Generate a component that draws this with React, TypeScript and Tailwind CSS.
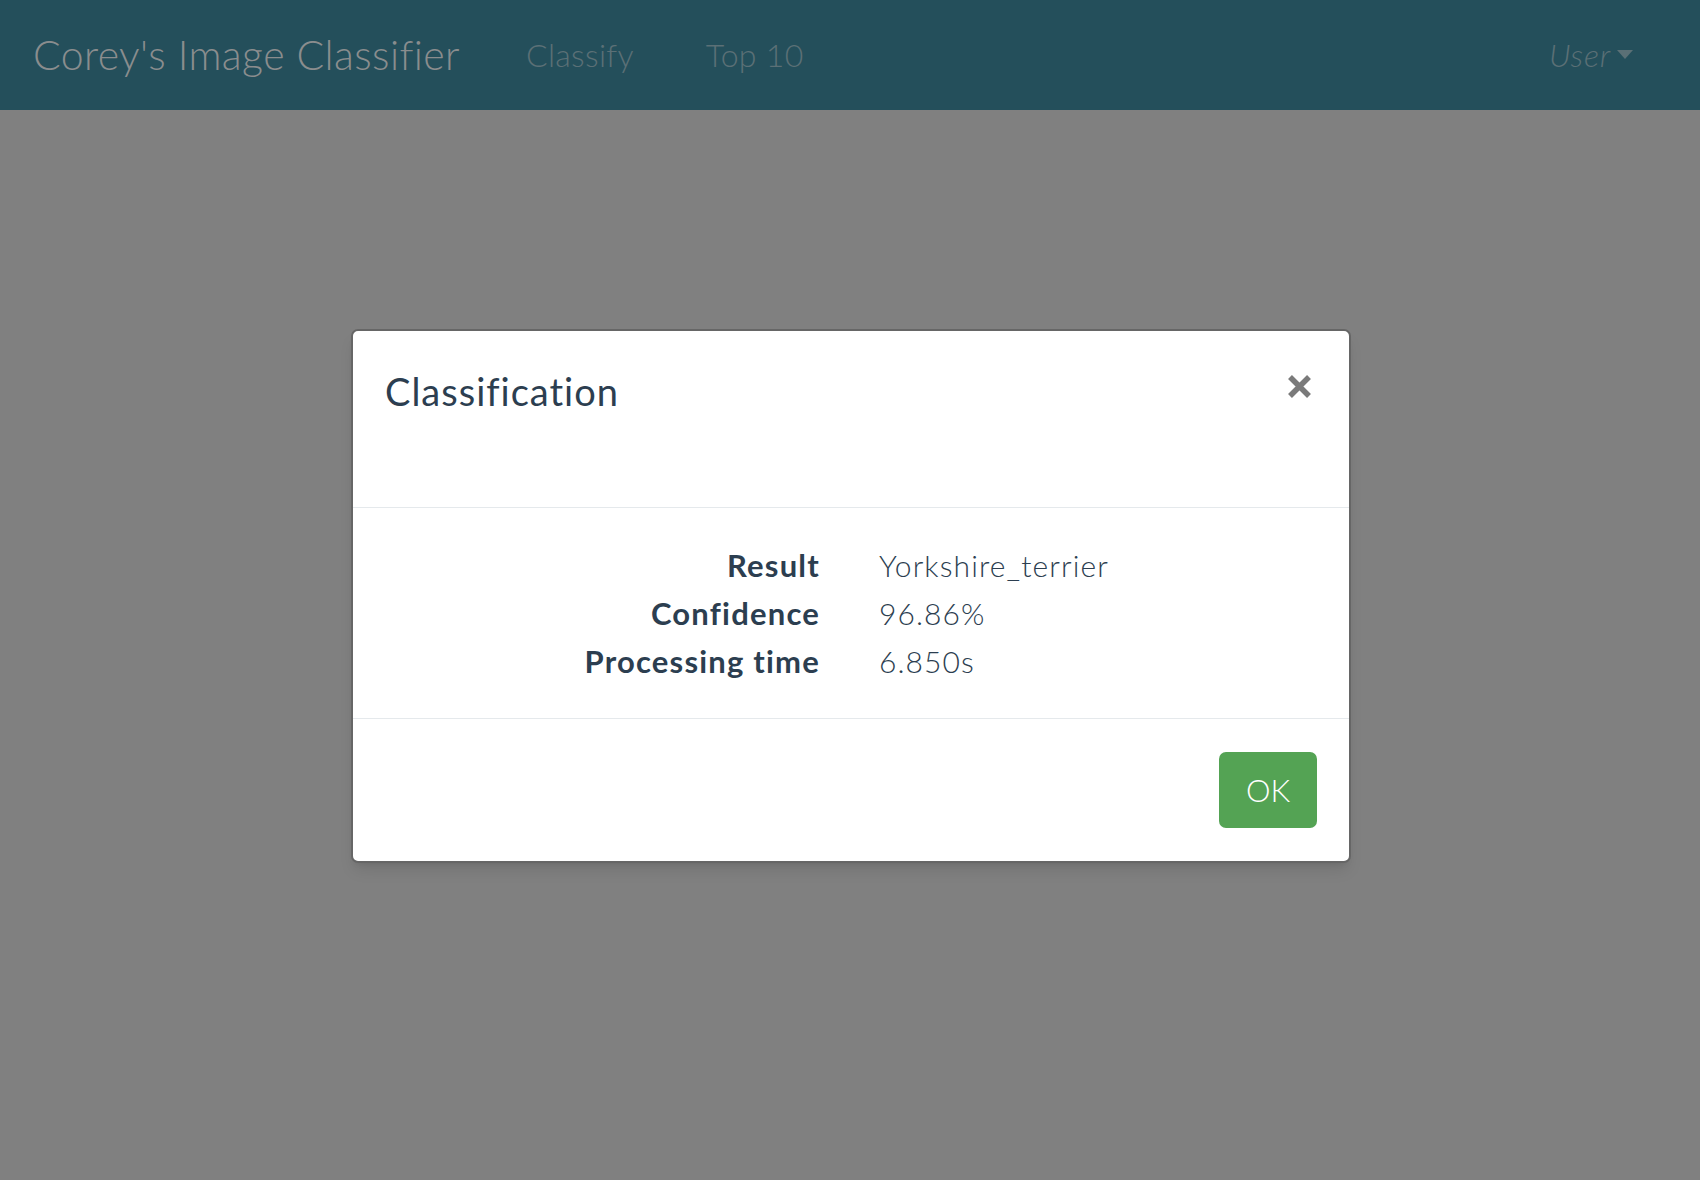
import React from "react";

const rows = [
  { label: "Result", value: "Yorkshire_terrier" },
  { label: "Confidence", value: "96.86%" },
  { label: "Processing time", value: "6.850s" },
];

export default function App() {
  return (
    <div className="min-h-screen bg-[#808080] font-['Lato','Noto_Sans',sans-serif]">
      {/* Navbar */}
      <nav className="flex h-[110px] items-center bg-[#244f5b] pl-[33px] pr-[67px]">
        <span className="text-[41px] font-light tracking-[0.4px] text-[#8a8d8e]">Corey's Image Classifier</span>
        <div className="ml-[66px] flex items-center gap-[72px] text-[32px] font-light tracking-[0.3px] text-[#5b7076]">
          <a>Classify</a>
          <a>Top 10</a>
        </div>
        <div className="ml-auto flex items-center gap-[6px] text-[32px] font-light italic tracking-[0.8px] text-[#5b7076]">
          <span>User</span>
          <svg width="16" height="9" viewBox="0 0 16 9" className="mb-[2px]">
            <path d="M0 0 L16 0 L8 9 Z" fill="#5b7076" />
          </svg>
        </div>
      </nav>

      {/* Modal */}
      <div className="flex justify-center pl-[2px] pt-[219px]">
        <div className="w-[1000px] rounded-[7px] border-2 border-[#666] bg-white text-[#2c3e50] shadow-lg">
          <div className="flex h-[177px] items-start justify-between border-b border-[#e5e9ec] pl-[32px] pr-[36px] pt-[30px]">
            <h4 className="text-[38px] leading-[60px] tracking-[1px]">Classification</h4>
            <button className="mt-[12px] text-[#777]">
              <svg width="27" height="27" viewBox="0 0 27 27">
                <path d="M4 4 L23 23 M23 4 L4 23" stroke="#7a7a7a" strokeWidth="5.5" />
              </svg>
            </button>
          </div>
          <div className="border-b border-[#e5e9ec] py-[33px]">
            {rows.map((r) => (
              <div key={r.label} className="flex h-[48px] items-center">
                <div className="w-[467px] text-right text-[31px] font-bold tracking-[1.2px]">{r.label}</div>
                <div className="pl-[59px] text-[30px] font-light tracking-[1.1px]">{r.value}</div>
              </div>
            ))}
          </div>
          <div className="flex h-[142px] items-center justify-end pr-[32px]">
            <button className="h-[76px] w-[98px] rounded-[7px] bg-[#54a354] text-[31px] font-light text-white">
              OK
            </button>
          </div>
        </div>
      </div>
    </div>
  );
}
